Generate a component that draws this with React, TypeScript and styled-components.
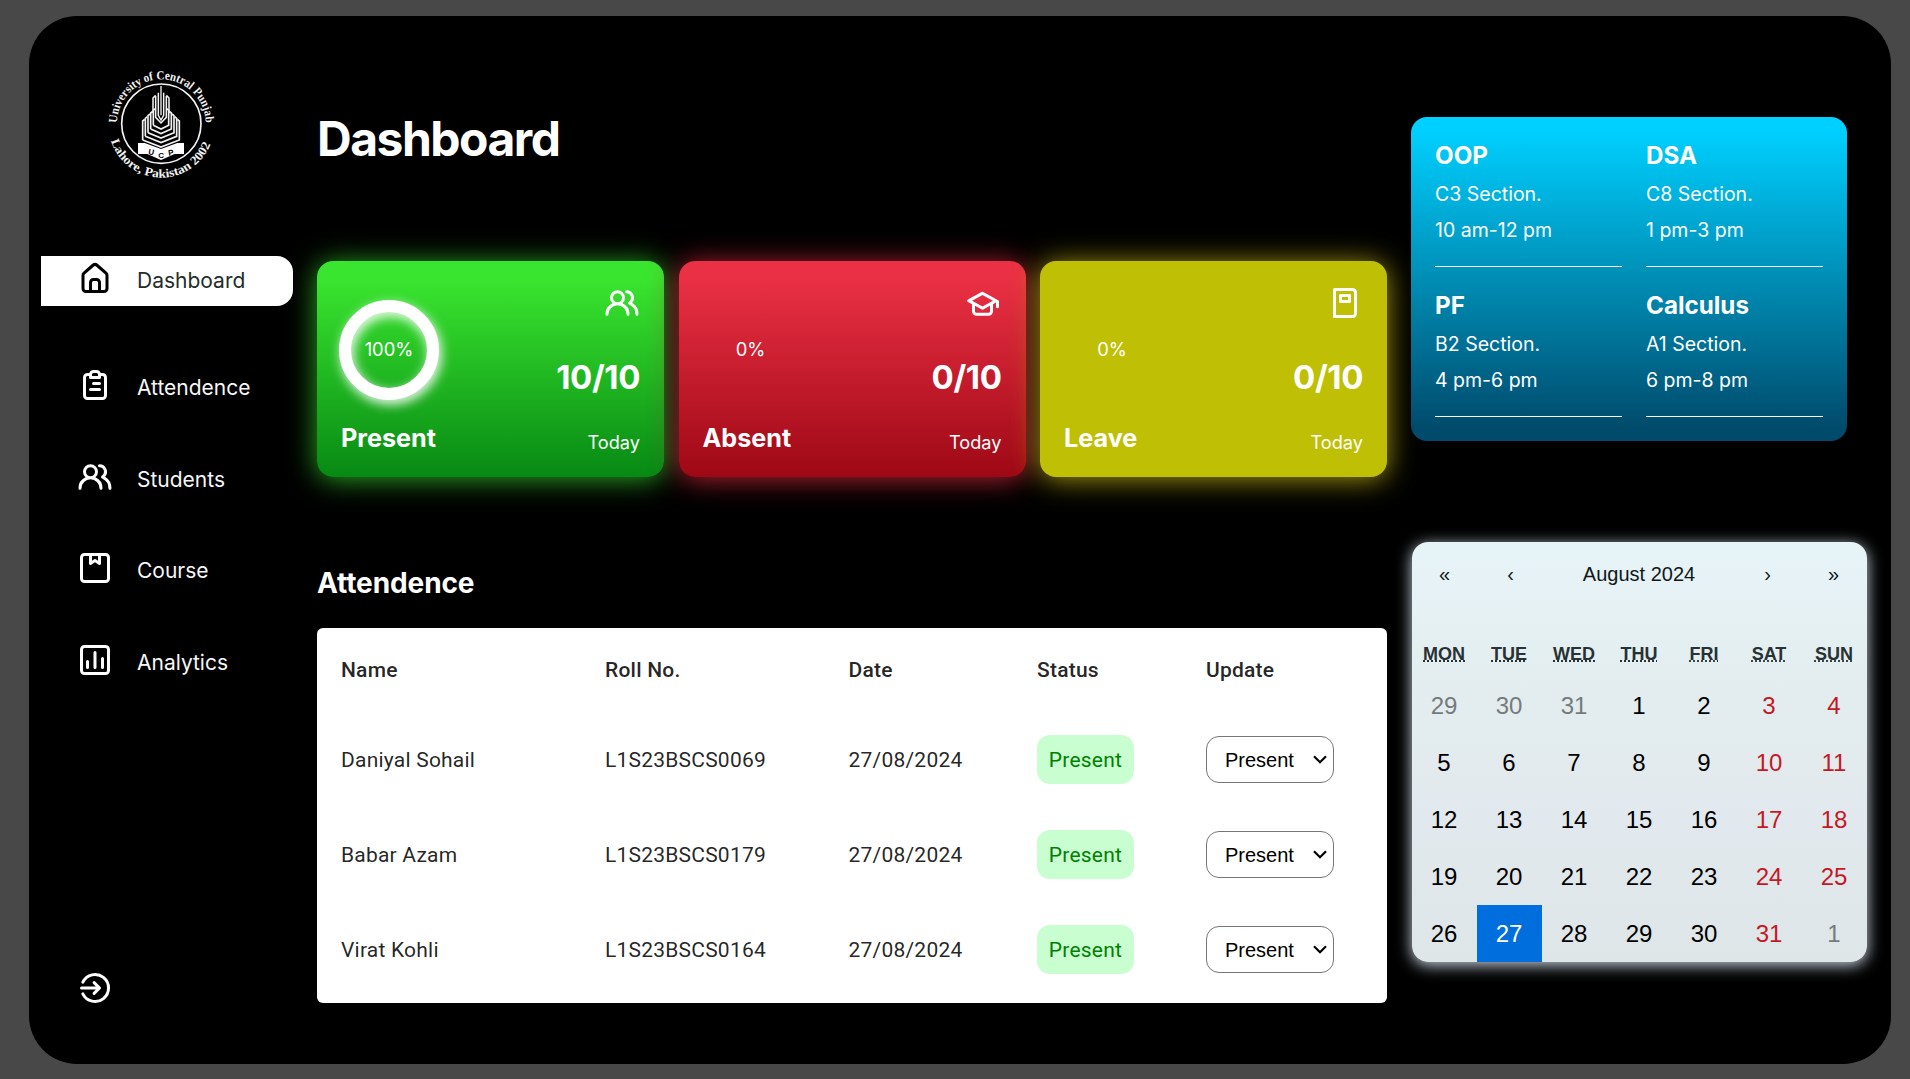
import React, { useState } from "react";
import styled, { createGlobalStyle, css } from "styled-components";

const GlobalStyle = createGlobalStyle`
  * { box-sizing: border-box; margin: 0; padding: 0; }
  body { background: #484848; color: #fff; font-family: Inter, sans-serif; font-size: 21px; overflow: hidden; }
`;

/* ---------- page frame ---------- */

const Page = styled.div`
  height: 1079px;
  padding: 16px 19px 15px 29px;
  background: #484848;
`;

const Frame = styled.div`
  display: grid;
  grid-template-columns: 264px 1070px 456px;
  column-gap: 24px;
  height: 1048px;
  background: #000;
  border-radius: 48px;
  overflow: hidden;
`;

/* ---------- icons ---------- */

const Glyph = styled.svg`
  display: block;
  width: 36px;
  height: 36px;
  flex: none;
  fill: currentColor;
`;

const icons = {
  home: "M20,8h0L14,2.74a3,3,0,0,0-4,0L4,8a3,3,0,0,0-1,2.26V19a3,3,0,0,0,3,3H18a3,3,0,0,0,3-3V10.25A3,3,0,0,0,20,8ZM14,20H10V15a1,1,0,0,1,1-1h2a1,1,0,0,1,1,1Zm5-1a1,1,0,0,1-1,1H16V15a3,3,0,0,0-3-3H11a3,3,0,0,0-3,3v5H6a1,1,0,0,1-1-1V10.25a1,1,0,0,1,.34-.75l6-5.25a1,1,0,0,1,1.32,0l6,5.25a1,1,0,0,1,.34.75Z",
  clipboard:
    "M15,14H9a1,1,0,0,0,0,2h6a1,1,0,0,0,0-2ZM17,4H15.82A3,3,0,0,0,13,2H11A3,3,0,0,0,8.18,4H7A3,3,0,0,0,4,7V19a3,3,0,0,0,3,3H17a3,3,0,0,0,3-3V7A3,3,0,0,0,17,4ZM10,5a1,1,0,0,1,1-1h2a1,1,0,0,1,1,1V6H10Zm8,14a1,1,0,0,1-1,1H7a1,1,0,0,1-1-1V7A1,1,0,0,1,7,6H8V7A1,1,0,0,0,9,8h6a1,1,0,0,0,1-1V6h1a1,1,0,0,1,1,1Zm-3-9H11a1,1,0,0,0,0,2h4a1,1,0,0,0,0-2Z",
  users:
    "M12.3,12.22A4.92,4.92,0,0,0,14,8.5a5,5,0,0,0-10,0,4.92,4.92,0,0,0,1.7,3.72A8,8,0,0,0,1,19.5a1,1,0,0,0,2,0,6,6,0,0,1,12,0,1,1,0,0,0,2,0A8,8,0,0,0,12.3,12.22ZM9,11.5a3,3,0,1,1,3-3A3,3,0,0,1,9,11.5Zm9.74.32A5,5,0,0,0,15,3.5a1,1,0,0,0,0,2,3,3,0,0,1,3,3,3,3,0,0,1-1.5,2.59,1,1,0,0,0-.5.84,1,1,0,0,0,.45.86l.39.26.13.07a7,7,0,0,1,4,6.38,1,1,0,0,0,2,0A9,9,0,0,0,18.74,11.82Z",
  package:
    "M19,2H5A3,3,0,0,0,2,5V19a3,3,0,0,0,3,3H19a3,3,0,0,0,3-3V5A3,3,0,0,0,19,2ZM14,4V7.13l-1.45-1a1,1,0,0,0-1.1,0L10,7.13V4Zm6,15a1,1,0,0,1-1,1H5a1,1,0,0,1-1-1V5A1,1,0,0,1,5,4H8V9a1,1,0,0,0,1.55.83L12,8.2l2.45,1.63A1,1,0,0,0,16,9V4h3a1,1,0,0,1,1,1Z",
  chart:
    "M12,6a1,1,0,0,0-1,1V17a1,1,0,0,0,2,0V7A1,1,0,0,0,12,6ZM7,12a1,1,0,0,0-1,1v4a1,1,0,0,0,2,0V13A1,1,0,0,0,7,12Zm10-2a1,1,0,0,0-1,1v6a1,1,0,0,0,2,0V11A1,1,0,0,0,17,10Zm2-8H5A3,3,0,0,0,2,5V19a3,3,0,0,0,3,3H19a3,3,0,0,0,3-3V5A3,3,0,0,0,19,2Zm1,17a1,1,0,0,1-1,1H5a1,1,0,0,1-1-1V5A1,1,0,0,1,5,4H19a1,1,0,0,1,1,1Z",
  graduation:
    "M21.49,10.19l-1-.55h0l-9-5h-.11a1.06,1.06,0,0,0-.19-.06l-.19,0h-.18l-.2,0a1.17,1.17,0,0,0-.2.06h-.11l-9,5a1,1,0,0,0,0,1.74L4,12.76V17.5a3,3,0,0,0,3,3h8a3,3,0,0,0,3-3V12.76l2-1.12V14.5a1,1,0,0,0,2,0V11.06A1,1,0,0,0,21.49,10.19ZM16,17.5a1,1,0,0,1-1,1H7a1,1,0,0,1-1-1V13.87l4.51,2.5.15.06.09,0a1,1,0,0,0,.25,0h0a1,1,0,0,0,.25,0l.09,0a.47.47,0,0,0,.15-.06L16,13.87Zm-5-3.14L4.06,10.5,11,6.64l6.94,3.86Z",
  book: "M17,2H5A1,1,0,0,0,4,3V21a1,1,0,0,0,1,1H17a3,3,0,0,0,3-3V5A3,3,0,0,0,17,2Zm1,17a1,1,0,0,1-1,1H6V4H17a1,1,0,0,1,1,1ZM9,12h6a1,1,0,0,0,1-1V7a1,1,0,0,0-1-1H9A1,1,0,0,0,8,7v4A1,1,0,0,0,9,12Zm1-4h4v2H10Z",
};

function Icon({ name }: { name: keyof typeof icons }) {
  return (
    <Glyph viewBox="0 0 24 24">
      <path d={icons[name]} />
    </Glyph>
  );
}

function SignOutIcon() {
  return (
    <Glyph viewBox="0 0 24 24">
      <g fill="none" stroke="currentColor" strokeWidth="2" strokeLinecap="round" strokeLinejoin="round">
        <path d="M3.9 8.1A9 9 0 1 1 3.9 15.9" />
        <path d="M3 12H14.6M11.4 8.4L15 12L11.4 15.6" />
      </g>
    </Glyph>
  );
}

/* ---------- sidebar ---------- */

const Sidebar = styled.aside`
  display: flex;
  flex-direction: column;
  padding: 44px 0 58px 12px;
`;

const Crest = styled.svg`
  display: block;
  width: 140px;
  height: 130px;
  margin-left: 49px;
`;

const Menu = styled.nav`
  display: flex;
  flex-direction: column;
  gap: 42px;
  margin-top: 66px;
`;

const MenuItem = styled.a<{ $active?: boolean }>`
  display: flex;
  align-items: center;
  gap: 24px;
  height: 49.7px;
  padding-left: 36px;
  color: #f7f7f7;
  svg { margin-bottom: 5px; color: #fff; }
  ${(p) =>
    p.$active &&
    css`
      margin-bottom: 15px;
      background: #fff;
      color: #242d29;
      border-radius: 0 16px 16px 0;
      svg { color: #000; }
    `}
`;

const SignOut = styled.button`
  margin: auto 0 0 36px;
  width: 36px;
  border: 0;
  background: none;
  color: #fff;
`;

const wings = [158, 166, 174, 182, 190];

function Logo() {
  return (
    <Crest viewBox="0 0 420 390">
      <defs>
        <path id="ringTop" d="M81 191A133 133 0 0 1 347 191" />
        <path id="ringBottom" d="M62 238A158 158 0 0 0 366 238" />
      </defs>
      <g fill="#f2f2f2" fontFamily="'Liberation Serif', serif" fontWeight="700" fontSize="37">
        <text><textPath href="#ringTop" startOffset="2" textLength="413" lengthAdjust="spacingAndGlyphs">University of Central Punjab</textPath></text>
        <text><textPath href="#ringBottom" startOffset="4" textLength="390" lengthAdjust="spacingAndGlyphs">Lahore, Pakistan 2002</textPath></text>
      </g>
      <circle cx="214" cy="191" r="119" fill="none" stroke="#f2f2f2" strokeWidth="5" />
      <g fill="none" stroke="#f2f2f2" strokeWidth="5">
        <path d="M213 78V166" strokeWidth="4" />
        <path d="M205 98V166L213 180L221 166V98" strokeWidth="4.4" />
        <path d="M197 108V172L213 189L229 172V108" strokeWidth="4.6" />
        <path d="M189 160V114L197 106M237 160V114L229 106" strokeWidth="4.6" />
        {wings.map((x, i) => {
          const low = 240 - i * 11;
          const top = 183 - i * 8;
          return <path key={x} d={`M${x} ${low}V${top}L${x + 6} ${top - 5}M${x} ${low}L213 ${low + 21 - i * 2.5}L${426 - x} ${low}V${top}L${420 - x} ${top - 5}`} />;
        })}
      </g>
      <path d="M144 249L164 249L213 267L262 249L282 249V282L254 282L213 300L172 282L144 282Z" fill="#fff" />
      <text x="174 204.5 236" y="283 294 287" rotate="10 0 -10" fill="#000" fontFamily="'Liberation Sans', sans-serif" fontWeight="700" fontSize="24">UCP</text>
    </Crest>
  );
}

/* ---------- main column ---------- */

const Main = styled.main`
  display: flex;
  flex-direction: column;
`;

const Title = styled.h1`
  margin: 94px 0 93px;
  height: 58px;
  line-height: 58px;
  font-size: 48px;
  font-weight: 700;
  letter-spacing: -1.5px;
`;

const Cards = styled.section`
  display: grid;
  grid-template-columns: repeat(3, 1fr);
  column-gap: 14.5px;
`;

const Card = styled.article<{ $fill: string; $glow: string }>`
  display: flex;
  justify-content: space-between;
  height: 216px;
  padding: 24px;
  border-radius: 16px;
  background: ${(p) => p.$fill};
  box-shadow: 0 2px 28px ${(p) => p.$glow};
`;

const CardSide = styled.div<{ $end?: boolean }>`
  display: flex;
  flex-direction: column;
  justify-content: space-between;
  align-items: ${(p) => (p.$end ? "flex-end" : "flex-start")};
  > svg { margin-bottom: 2.5px; }
`;

const Gauge = styled.div`
  display: grid;
  grid-template: 96px / 96px;
  place-items: center;
  margin-top: 17px;
  > * { grid-area: 1 / 1; }
`;

const Ring = styled.svg`
  width: 100px;
  height: 100px;
  margin: -2px;
  overflow: visible;
  filter: drop-shadow(2px 4px 6px #fff);
`;

const Percent = styled.span`
  font-size: 18.4px;
  line-height: 22px;
  margin-bottom: 2px;
`;

const CardName = styled.h3`
  font-size: 25.2px;
  line-height: 30px;
`;

const Count = styled.strong`
  font-size: 33px;
  line-height: 40px;
  font-weight: 700;
  letter-spacing: -0.4px;
`;

const Period = styled.small`
  font-size: 18.2px;
  line-height: 22px;
`;

const Subtitle = styled.h2`
  margin: 89px 0 28px;
  font-size: 28px;
  line-height: 34px;
  letter-spacing: -0.1px;
`;

/* ---------- table ---------- */

const TableBox = styled.section`
  height: 374.7px;
  border-radius: 6px;
  background: #fff;
  overflow: hidden;
  color: rgba(0, 0, 0, 0.87);
  font-family: Roboto, sans-serif;
  font-size: 21px;
  letter-spacing: 0.22px;
`;

const TableRow = styled.div<{ $head?: boolean }>`
  display: grid;
  grid-template-columns: 264px 243.5px 188.5px 169px 1fr;
  align-items: center;
  height: ${(p) => (p.$head ? 84 : 95)}px;
  padding: 0 24px;
  font-weight: ${(p) => (p.$head ? 500 : 400)};
`;

const Badge = styled.span`
  display: grid;
  place-items: center;
  width: 97px;
  height: 49px;
  border-radius: 13px;
  background: #c9ffd0;
  color: #008000;
`;

const SelectBox = styled.label`
  display: grid;
  align-items: center;
  width: 128px;
  height: 47px;
  > * { grid-area: 1 / 1; }
  svg { justify-self: end; margin-right: 7px; pointer-events: none; }
`;

const Select = styled.select`
  appearance: none;
  width: 128px;
  height: 47px;
  padding: 0 18px;
  border: 1px solid #767676;
  border-radius: 13px;
  background: #fff;
  color: #000;
  font: 20px "Liberation Sans", Arial, sans-serif;
`;

/* ---------- right column ---------- */

const Aside = styled.aside`
  display: flex;
  flex-direction: column;
  padding-top: 101px;
`;

const Schedule = styled.section`
  display: grid;
  grid-template: 126px 126px / 187px 177px;
  gap: 24px;
  width: 436px;
  height: 324px;
  padding: 24px;
  border-radius: 16px;
  background: linear-gradient(180deg, #00d0ff 4%, #004b6c 96%);
`;

const Lesson = styled.div`
  border-bottom: 1px solid #fff;
  font-size: 19.5px;
  line-height: 36px;
  h3 { font-size: 24.2px; line-height: 29px; margin-bottom: 6px; }
`;

const Calendar = styled.section`
  width: 455px;
  height: 420.5px;
  margin: 100.5px 0 0 0.5px;
  border-radius: 16px;
  background: linear-gradient(180deg, #e7f4f7 0%, #e3edef 35%, #e2e9ee 65%, #dee6e8 100%);
  box-shadow: 0 3px 15px rgba(215, 228, 240, 0.95);
  color: #000;
  font-family: "Liberation Sans", Arial, sans-serif;
`;

const CalendarNav = styled.header`
  display: grid;
  grid-template-columns: 66px 66px 1fr 66px 66px;
  place-items: center;
  height: 66px;
  font-size: 20px;
  color: #10181a;
`;

const Week = styled.div`
  display: grid;
  grid-template-columns: repeat(7, 1fr);
`;

const Weekdays = styled(Week)`
  height: 69.5px;
  padding-top: 36px;
  justify-items: center;
  font-size: 18px;
  line-height: 21px;
  font-weight: 700;
  color: #283134;
  abbr { text-decoration: underline dotted; }
`;

const Day = styled.button<{ $tone: string; $today?: boolean }>`
  height: 57px;
  border: 0;
  background: ${(p) => (p.$today ? "#006edc" : "none")};
  color: ${(p) => (p.$today ? "#fff" : p.$tone)};
  font: 24px "Liberation Sans", Arial, sans-serif;
`;

/* ---------- data ---------- */

const menu: { label: string; icon: keyof typeof icons }[] = [
  { label: "Dashboard", icon: "home" },
  { label: "Attendence", icon: "clipboard" },
  { label: "Students", icon: "users" },
  { label: "Course", icon: "package" },
  { label: "Analytics", icon: "chart" },
];

const stats: { name: string; percent: number; icon: keyof typeof icons; fill: string; glow: string }[] = [
  { name: "Present", percent: 100, icon: "users", fill: "linear-gradient(180deg, #3ae52f 8%, #078914 100%)", glow: "#2cab24" },
  { name: "Absent", percent: 0, icon: "graduation", fill: "linear-gradient(180deg, #ea3044 8%, #9e0815 100%)", glow: "#b92234" },
  { name: "Leave", percent: 0, icon: "book", fill: "#bfc006", glow: "#a99a10" },
];

const students = [
  ["Daniyal Sohail", "L1S23BSCS0069"],
  ["Babar Azam", "L1S23BSCS0179"],
  ["Virat Kohli", "L1S23BSCS0164"],
];

const lessons = [
  ["OOP", "C3 Section.", "10 am-12 pm"],
  ["DSA", "C8 Section.", "1 pm-3 pm"],
  ["PF", "B2 Section.", "4 pm-6 pm"],
  ["Calculus", "A1 Section.", "6 pm-8 pm"],
];

const days = Array.from({ length: 35 }, (_, i) => {
  const n = i - 2;
  if (n < 1) return { label: n + 31, tone: "#757b7d" };
  if (n > 31) return { label: n - 31, tone: "#757b7d" };
  return { label: n, tone: i % 7 > 4 ? "#c51824" : "#000", today: n === 27 };
});

export default function App() {
  const [active, setActive] = useState(0);
  return (
    <Page>
      <GlobalStyle />
      <Frame>
        <Sidebar>
          <Logo />
          <Menu>
            {menu.map((m, i) => (
              <MenuItem key={m.label} $active={i === active} onClick={() => setActive(i)}>
                <Icon name={m.icon} />
                <span>{m.label}</span>
              </MenuItem>
            ))}
          </Menu>
          <SignOut aria-label="Sign out">
            <SignOutIcon />
          </SignOut>
        </Sidebar>

        <Main>
          <Title>Dashboard</Title>
          <Cards>
            {stats.map((s) => (
              <Card key={s.name} $fill={s.fill} $glow={s.glow}>
                <CardSide>
                  <Gauge>
                    {s.percent > 0 && (
                      <Ring viewBox="0 0 100 100">
                        <circle cx="50" cy="50" r="44" fill="none" stroke="#fff" strokeWidth="12" />
                      </Ring>
                    )}
                    <Percent>{s.percent}%</Percent>
                  </Gauge>
                  <CardName>{s.name}</CardName>
                </CardSide>
                <CardSide $end>
                  <Icon name={s.icon} />
                  <Count>{s.percent / 10}/10</Count>
                  <Period>Today</Period>
                </CardSide>
              </Card>
            ))}
          </Cards>

          <Subtitle>Attendence</Subtitle>
          <TableBox>
            <TableRow $head>
              <span>Name</span>
              <span>Roll No.</span>
              <span>Date</span>
              <span>Status</span>
              <span>Update</span>
            </TableRow>
            {students.map(([name, roll]) => (
              <TableRow key={roll}>
                <span>{name}</span>
                <span>{roll}</span>
                <span>27/08/2024</span>
                <Badge>Present</Badge>
                <SelectBox>
                  <Select defaultValue="Present">
                    <option>Present</option>
                    <option>Absent</option>
                    <option>Leave</option>
                  </Select>
                  <svg width="14" height="9" viewBox="0 0 14 9">
                    <path d="M1 1.2L7 7.2L13 1.2" fill="none" stroke="#000" strokeWidth="2.2" />
                  </svg>
                </SelectBox>
              </TableRow>
            ))}
          </TableBox>
        </Main>

        <Aside>
          <Schedule>
            {lessons.map(([name, section, time]) => (
              <Lesson key={name}>
                <h3>{name}</h3>
                <p>{section}</p>
                <p>{time}</p>
              </Lesson>
            ))}
          </Schedule>
          <Calendar>
            <CalendarNav>
              <span>«</span>
              <span>‹</span>
              <span>August 2024</span>
              <span>›</span>
              <span>»</span>
            </CalendarNav>
            <Weekdays>
              {["MON", "TUE", "WED", "THU", "FRI", "SAT", "SUN"].map((d) => (
                <abbr key={d} title={d}>{d}</abbr>
              ))}
            </Weekdays>
            <Week>
              {days.map((d, i) => (
                <Day key={i} $tone={d.tone} $today={d.today}>{d.label}</Day>
              ))}
            </Week>
          </Calendar>
        </Aside>
      </Frame>
    </Page>
  );
}
